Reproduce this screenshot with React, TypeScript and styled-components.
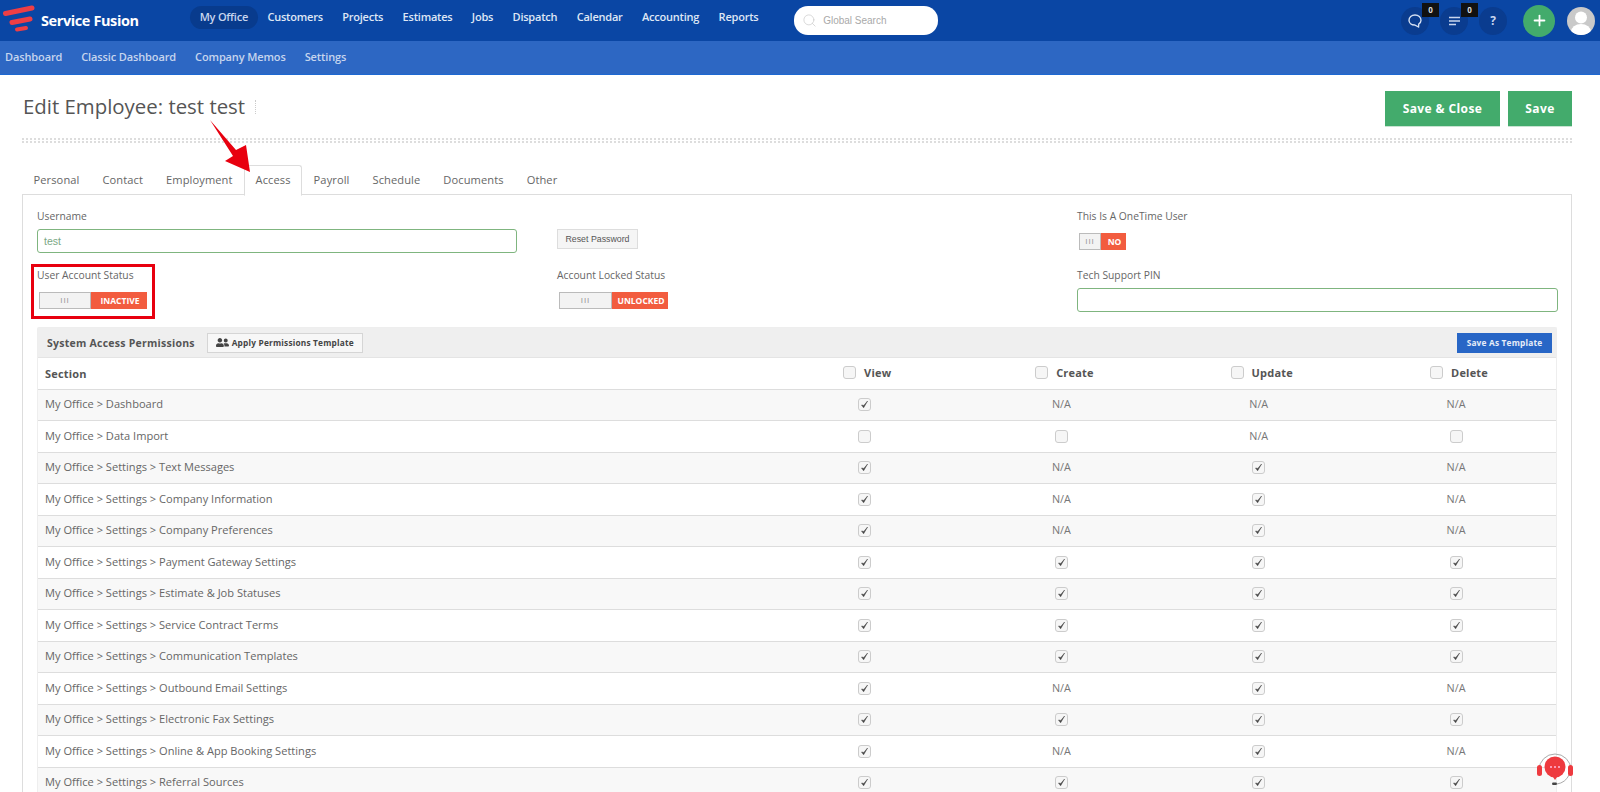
import styled, { createGlobalStyle } from "styled-components";
import { Search, Plus } from "lucide-react";
import { FaUserFriends } from "react-icons/fa";

const GlobalStyle = createGlobalStyle`
  html, body {
    margin: 0;
    height: 792px;
    overflow: hidden;
    background: #fff;
    font-family: "Open Sans", "Liberation Sans", sans-serif;
    color: #555;
  }
  *, *::after { box-sizing: border-box; }
`;

const TopBar = styled.header`
  height: 41px;
  background: #0a46a4;
  display: flex;
  align-items: center;
  position: relative;
`;

const Logo = styled.div`
  width: 190px;
  display: flex;
  align-items: center;
  gap: 5px;
  padding-left: 3px;
  color: #fff;
  font-size: 14.5px;
  font-weight: 700;
  letter-spacing: -0.4px;
`;

const MainNav = styled.nav`
  display: flex;
  align-items: center;
`;

const NavItem = styled.a<{ $active?: boolean }>`
  height: 23px;
  margin-top: -7px;
  padding: 0 9.7px 2px;
  display: flex;
  align-items: center;
  border-radius: 12px;
  font-size: 11px;
  font-weight: 600;
  letter-spacing: -0.22px;
  color: ${p => (p.$active ? "#c8d6ee" : "#dfe7f5")};
  background: ${p => (p.$active ? "#083b8d" : "transparent")};
`;

const SearchBox = styled.div`
  width: 144px;
  height: 29px;
  margin-left: 26px;
  padding-left: 8px;
  display: flex;
  align-items: center;
  gap: 6px;
  background: #fff;
  border-radius: 14px;
  color: #a9a9a9;
  font-family: "Liberation Sans", sans-serif;
  font-size: 10px;
`;

const TopActions = styled.div`
  margin-left: auto;
  padding-right: 5px;
  display: flex;
  align-items: center;
`;

const RoundIcon = styled.div`
  width: 28px;
  height: 28px;
  margin-right: 11px;
  border-radius: 50%;
  background: #0a3c8f;
  color: #c9d6ee;
  font-size: 12px;
  font-weight: 700;
  display: flex;
  align-items: center;
  justify-content: center;
  position: relative;
`;

const Badge = styled.span`
  position: absolute;
  top: -4px;
  right: -10px;
  width: 17px;
  height: 14px;
  background: #111;
  color: #ddd;
  font-size: 8px;
  font-weight: 700;
  display: flex;
  align-items: center;
  justify-content: center;
`;

const AddButton = styled.div`
  width: 32px;
  height: 32px;
  margin: 0 12px 0 5px;
  border-radius: 50%;
  background: #43ab6c;
  color: #fff;
  display: flex;
  align-items: center;
  justify-content: center;
`;

const Avatar = styled.div`
  width: 28px;
  height: 28px;
  border-radius: 50%;
  overflow: hidden;
  background: #c9c9c9;
`;

const SubBar = styled.div`
  height: 34px;
  padding: 0 0 2px 5px;
  background: #2d67c3;
  border-bottom: 1px solid #1d68d2;
  display: flex;
  align-items: center;
  gap: 19px;
`;

const SubItem = styled.a`
  color: #c6d5ee;
  font-size: 11px;
  font-weight: 600;
  letter-spacing: -0.12px;
`;

const Page = styled.main`
  padding: 15px 28px 0 22px;
  position: relative;
`;

const TitleRow = styled.div`
  height: 37px;
  display: flex;
  align-items: center;
  justify-content: space-between;
`;

const Title = styled.h1`
  margin: 0 0 6px 1px;
  display: flex;
  align-items: center;
  font-size: 20.4px;
  font-weight: 400;
  color: #555;
`;

const TitleRule = styled.span`
  width: 0;
  height: 14px;
  margin: 3px 0 0 10px;
  border-left: 1px dotted #ccc;
`;

const SaveButtons = styled.div`
  display: flex;
  gap: 8px;
`;

const SaveButton = styled.button<{ $w: number }>`
  width: ${p => p.$w}px;
  height: 36px;
  border: 0;
  border-bottom: 1px solid #c9e3d2;
  background: #43ab6c;
  color: #fff;
  font-family: inherit;
  font-size: 12px;
  font-weight: 700;
  letter-spacing: 0.4px;
`;

const DottedRule = styled.div`
  height: 5px;
  margin-top: 11px;
  border-top: 2px dotted #ddd;
  border-bottom: 2px dotted #ddd;
`;

const Tabs = styled.div`
  height: 30px;
  margin-top: 22px;
  display: flex;
  position: relative;
  z-index: 1;
`;

const Tab = styled.a<{ $active?: boolean }>`
  padding: 0 11.5px 2px;
  display: flex;
  align-items: center;
  font-size: 11.1px;
  letter-spacing: 0.1px;
  color: #666;
  ${p =>
    p.$active &&
    `
    padding: 0 10.5px 2px;
    background: #fff;
    border: 1px solid #ddd;
    border-bottom: 1px solid #fff;
    border-radius: 3px 3px 0 0;
    height: 31px;
  `}
`;

const Panel = styled.section`
  margin-top: -1px;
  height: 620px;
  padding: 15px 14px 0;
  border: 1px solid #ddd;
  border-bottom: 0;
`;

const FormGrid = styled.div`
  display: grid;
  grid-template-columns: 520px 520px 481px;
  row-gap: 16px;
`;

const Field = styled.div<{ $flagged?: boolean }>`
  position: relative;
  ${p =>
    p.$flagged &&
    `
    &::after {
      content: "";
      position: absolute;
      top: -5px;
      left: -6px;
      width: 124px;
      height: 55px;
      border: 3px solid #e8000f;
    }
  `}
`;

const Label = styled.label`
  display: block;
  height: 14px;
  line-height: 12px;
  font-size: 10.3px;
  color: #666;
`;

const TextInput = styled.div<{ $w?: number }>`
  width: ${p => (p.$w ? `${p.$w}px` : "100%")};
  height: 24px;
  margin-top: 5px;
  padding-left: 6px;
  border: 1px solid #7fb57f;
  border-radius: 3px;
  line-height: 22px;
  font-family: "Liberation Sans", sans-serif;
  font-size: 10.5px;
  color: #7aa884;
`;

const ResetButton = styled.button`
  width: 81px;
  height: 20px;
  margin-top: 19px;
  padding: 0;
  border: 1px solid #ddd;
  background: #f5f5f5;
  color: #555;
  font-family: "Liberation Sans", sans-serif;
  font-size: 8.8px;
`;

const Toggle = styled.div`
  height: 17px;
  margin: 9px 0 0 2px;
  display: flex;
  width: fit-content;
`;

const ToggleHandle = styled.div<{ $w: number }>`
  width: ${p => p.$w}px;
  border: 1px solid #bbb;
  background: #f3f3f3;
  color: #999;
  font-family: "Liberation Sans", sans-serif;
  font-size: 8px;
  letter-spacing: 1px;
  display: flex;
  align-items: center;
  justify-content: center;
`;

const ToggleValue = styled.div<{ $w: number }>`
  width: ${p => p.$w}px;
  padding-left: 2px;
  background: #f25c3f;
  color: #fff;
  font-size: 8.5px;
  font-weight: 700;
  display: flex;
  align-items: center;
  justify-content: center;
`;

const TableBox = styled.div`
  margin-top: 15px;
  border: 1px solid #eee;
  border-bottom: 0;
  border-radius: 2px;
`;

const TableBar = styled.div`
  height: 30px;
  padding: 0 4px 0 9px;
  background: #efefef;
  border-bottom: 1px solid #e4e4e4;
  display: flex;
  align-items: center;
`;

const BarTitle = styled.div`
  font-size: 10.5px;
  font-weight: 700;
  letter-spacing: 0.25px;
  color: #555;
`;

const TemplateButton = styled.button`
  width: 156px;
  height: 20px;
  margin-left: 12px;
  padding: 0;
  border: 1px solid #d5d5d5;
  background: #f7f7f7;
  color: #444;
  font-family: inherit;
  font-size: 8.3px;
  font-weight: 700;
  letter-spacing: 0.2px;
  display: flex;
  align-items: center;
  justify-content: center;
  gap: 3px;
`;

const SaveTemplate = styled.button`
  width: 95px;
  height: 20px;
  margin-left: auto;
  padding: 0;
  border: 0;
  background: #2866c6;
  color: #e6edf8;
  font-family: inherit;
  font-size: 8.3px;
  font-weight: 700;
  letter-spacing: 0.2px;
`;

const Row = styled.div<{ $shaded?: boolean }>`
  height: 31.5px;
  padding-left: 7px;
  display: grid;
  grid-template-columns: 720.5px repeat(4, 197.3px);
  align-items: center;
  background: ${p => (p.$shaded ? "#f8f8f8" : "#fff")};
  border-bottom: 1px solid #ddd;
  font-size: 11.08px;
  color: #666;
`;

const RowName = styled.div`
  margin-top: -2px;
`;

const HeadName = styled.div`
  font-size: 11px;
  font-weight: 700;
  letter-spacing: 0.2px;
  color: #555;
`;

const HeadCell = styled.div`
  margin-top: -1px;
  padding-left: 6px;
  display: flex;
  align-items: center;
  justify-content: center;
  gap: 8px;
`;

const Cell = styled.div`
  display: flex;
  justify-content: center;
`;

const NotApplicable = styled.span`
  margin-top: -2px;
  font-size: 10.8px;
  color: #777;
`;

const Box = styled.span`
  width: 13px;
  height: 13px;
  border: 1px solid #ccc;
  border-radius: 3px;
  background: #f6f6f6;
  display: flex;
  align-items: center;
  justify-content: center;
`;

const Help = styled.svg`
  position: absolute;
  left: 1536px;
  top: 748px;
`;

const Arrow = styled.svg`
  position: absolute;
  left: 205px;
  top: 40px;
  z-index: 2;
`;

type Perm = "c" | "u" | "n";

const rows: [string, Perm, Perm, Perm, Perm][] = [
  ["My Office > Dashboard", "c", "n", "n", "n"],
  ["My Office > Data Import", "u", "u", "n", "u"],
  ["My Office > Settings > Text Messages", "c", "n", "c", "n"],
  ["My Office > Settings > Company Information", "c", "n", "c", "n"],
  ["My Office > Settings > Company Preferences", "c", "n", "c", "n"],
  ["My Office > Settings > Payment Gateway Settings", "c", "c", "c", "c"],
  ["My Office > Settings > Estimate & Job Statuses", "c", "c", "c", "c"],
  ["My Office > Settings > Service Contract Terms", "c", "c", "c", "c"],
  ["My Office > Settings > Communication Templates", "c", "c", "c", "c"],
  ["My Office > Settings > Outbound Email Settings", "c", "n", "c", "n"],
  ["My Office > Settings > Electronic Fax Settings", "c", "c", "c", "c"],
  ["My Office > Settings > Online & App Booking Settings", "c", "n", "c", "n"],
  ["My Office > Settings > Referral Sources", "c", "c", "c", "c"],
];

const navItems = ["Customers", "Projects", "Estimates", "Jobs", "Dispatch", "Calendar", "Accounting", "Reports"];
const subItems = ["Dashboard", "Classic Dashboard", "Company Memos", "Settings"];
const tabs = ["Personal", "Contact", "Employment", "Access", "Payroll", "Schedule", "Documents", "Other"];

function CheckBox({ checked }: { checked?: boolean }) {
  return (
    <Box>
      {checked && (
        <svg width="9" height="9" viewBox="0 0 9 9">
          <path d="M1.5 5 L3.6 7.8 L7.6 1 L3.8 5.4 Z" fill="#444" stroke="#444" strokeWidth="0.5" />
        </svg>
      )}
    </Box>
  );
}

function PermCell({ value }: { value: Perm }) {
  return <Cell>{value === "n" ? <NotApplicable>N/A</NotApplicable> : <CheckBox checked={value === "c"} />}</Cell>;
}

function App() {
  return (
    <>
      <GlobalStyle />
      <TopBar>
        <Logo>
          <svg width="33" height="32" viewBox="0 0 33 32">
            <g fill="none" stroke="#ee3e45" strokeLinecap="round">
              <path d="M2.5 8.5 L29 3" strokeWidth="5" />
              <path d="M9 17.5 L27 14" strokeWidth="5" />
              <path d="M14 24.5 L23 23" strokeWidth="4" />
            </g>
          </svg>
          Service Fusion
        </Logo>
        <MainNav>
          <NavItem $active>My Office</NavItem>
          {navItems.map(item => (
            <NavItem key={item}>{item}</NavItem>
          ))}
        </MainNav>
        <SearchBox>
          <Search size={15} strokeWidth={1} color="#c4c4c4" />
          Global Search
        </SearchBox>
        <TopActions>
          <RoundIcon>
            <svg width="16" height="16" viewBox="0 0 16 16" fill="none" stroke="#d5e0f2" strokeWidth="1.4">
              <path d="M8 2 C4.5 2 2 4.2 2 7.2 C2 10 4.4 12 7.6 12 L11.5 14 L11.8 11 C13.2 10 14 8.7 14 7.2 C14 4.2 11.5 2 8 2 Z" />
            </svg>
            <Badge>0</Badge>
          </RoundIcon>
          <RoundIcon>
            <svg width="14" height="12" viewBox="0 0 14 12" stroke="#c9d6ee" strokeWidth="1.5">
              <path d="M2 2.5 H13 M2 6 H13 M2 9.5 H9" />
            </svg>
            <Badge>0</Badge>
          </RoundIcon>
          <RoundIcon>?</RoundIcon>
          <AddButton>
            <Plus size={17} strokeWidth={2.5} />
          </AddButton>
          <Avatar>
            <svg width="28" height="28" viewBox="0 0 28 28" fill="#fff">
              <circle cx="14" cy="10.5" r="6" />
              <ellipse cx="14" cy="25" rx="10" ry="8" />
            </svg>
          </Avatar>
        </TopActions>
      </TopBar>
      <SubBar>
        {subItems.map(item => (
          <SubItem key={item}>{item}</SubItem>
        ))}
      </SubBar>
      <Page>
        <TitleRow>
          <Title>
            Edit Employee: test test
            <TitleRule />
          </Title>
          <SaveButtons>
            <SaveButton $w={115}>Save &amp; Close</SaveButton>
            <SaveButton $w={64}>Save</SaveButton>
          </SaveButtons>
        </TitleRow>
        <DottedRule />
        <Tabs>
          {tabs.map(tab => (
            <Tab key={tab} $active={tab === "Access"}>
              {tab}
            </Tab>
          ))}
        </Tabs>
        <Panel>
          <FormGrid>
            <Field>
              <Label>Username</Label>
              <TextInput $w={480}>test</TextInput>
            </Field>
            <Field>
              <ResetButton>Reset Password</ResetButton>
            </Field>
            <Field>
              <Label>This Is A OneTime User</Label>
              <Toggle>
                <ToggleHandle $w={22}>III</ToggleHandle>
                <ToggleValue $w={25}>NO</ToggleValue>
              </Toggle>
            </Field>
            <Field $flagged>
              <Label>User Account Status</Label>
              <Toggle>
                <ToggleHandle $w={52}>III</ToggleHandle>
                <ToggleValue $w={56}>INACTIVE</ToggleValue>
              </Toggle>
            </Field>
            <Field>
              <Label>Account Locked Status</Label>
              <Toggle>
                <ToggleHandle $w={53}>III</ToggleHandle>
                <ToggleValue $w={56}>UNLOCKED</ToggleValue>
              </Toggle>
            </Field>
            <Field>
              <Label>Tech Support PIN</Label>
              <TextInput />
            </Field>
          </FormGrid>
          <TableBox>
            <TableBar>
              <BarTitle>System Access Permissions</BarTitle>
              <TemplateButton>
                <FaUserFriends size={13} />
                Apply Permissions Template
              </TemplateButton>
              <SaveTemplate>Save As Template</SaveTemplate>
            </TableBar>
            <Row>
              <HeadName>Section</HeadName>
              {["View", "Create", "Update", "Delete"].map(name => (
                <HeadCell key={name}>
                  <CheckBox />
                  <HeadName>{name}</HeadName>
                </HeadCell>
              ))}
            </Row>
            {rows.map(([name, view, create, update, del], i) => (
              <Row key={name} $shaded={i % 2 === 0}>
                <RowName>{name}</RowName>
                <PermCell value={view} />
                <PermCell value={create} />
                <PermCell value={update} />
                <PermCell value={del} />
              </Row>
            ))}
          </TableBox>
        </Panel>
        <Arrow width="50" height="62" viewBox="205 115 50 62">
          <path d="M210 120 L236 150 L246 145 L250 172 L225 161 L233 156 Z" fill="#e8000f" />
        </Arrow>
      </Page>
      <Help width="38" height="42" viewBox="0 0 38 42">
        <path d="M3 22 A16 16 0 1 1 35 22" fill="none" stroke="#aaa" strokeWidth="1" />
        <path d="M33 27 A16 16 0 0 1 21 36" fill="none" stroke="#aaa" strokeWidth="1" />
        <rect x="1" y="17" width="5" height="11" rx="2.5" fill="#ee3a3f" />
        <rect x="32" y="17" width="5" height="11" rx="2.5" fill="#ee3a3f" />
        <circle cx="19" cy="19" r="10.5" fill="#ee3a3f" />
        <path d="M17 29 H21 L19 32 Z" fill="#ee3a3f" />
        <circle cx="15" cy="19" r="1" fill="#fbd" />
        <circle cx="19" cy="19" r="1" fill="#fbd" />
        <circle cx="23" cy="19" r="1" fill="#fbd" />
        <rect x="16" y="34.5" width="5" height="2.5" rx="1.2" fill="#444" />
      </Help>
    </>
  );
}

export default App;
